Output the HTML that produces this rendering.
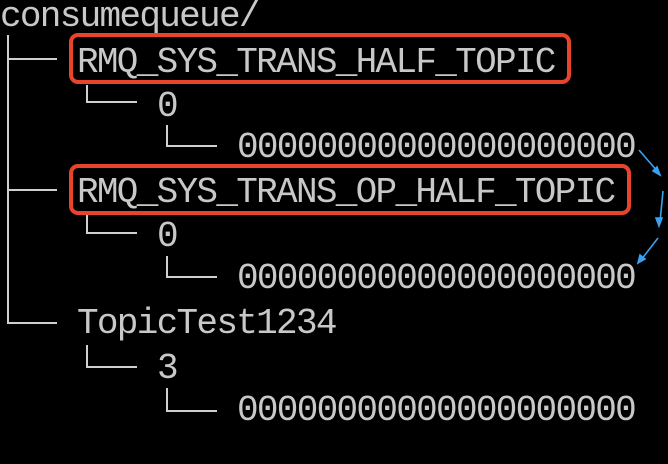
<!DOCTYPE html>
<html><head><style>
html,body{margin:0;padding:0;background:#000;width:668px;height:464px;overflow:hidden;position:relative}
.t{position:absolute;font-family:"Liberation Mono",monospace;font-size:36px;line-height:36px;letter-spacing:-1.7px;color:#c8c8c8;white-space:pre}
.l{position:absolute;background:#cfcfcf}
.box{position:absolute;border:4px solid #e8442c;border-radius:9px;box-sizing:border-box}
</style></head><body>
<div class="t" style="left:0;top:-1px">consumequeue/</div>
<div class="t" style="left:77px;top:45px">RMQ_SYS_TRANS_HALF_TOPIC</div>
<div class="t" style="left:157px;top:89px">0</div>
<div class="t" style="left:237px;top:130px">00000000000000000000</div>
<div class="t" style="left:77px;top:175px">RMQ_SYS_TRANS_OP_HALF_TOPIC</div>
<div class="t" style="left:157px;top:219px">0</div>
<div class="t" style="left:237px;top:261px">00000000000000000000</div>
<div class="t" style="left:77px;top:306px">TopicTest1234</div>
<div class="t" style="left:157px;top:351px">3</div>
<div class="t" style="left:237px;top:393px">00000000000000000000</div>

<div class="l" style="left:7px;top:35px;width:2px;height:289px"></div>
<div class="l" style="left:7px;top:58px;width:50px;height:2px"></div>
<div class="l" style="left:7px;top:189px;width:50px;height:2px"></div>
<div class="l" style="left:7px;top:322px;width:50px;height:2px"></div>

<div class="l" style="left:86px;top:85px;width:2px;height:18px"></div>
<div class="l" style="left:86px;top:101px;width:51px;height:2px"></div>
<div class="l" style="left:166px;top:125px;width:2px;height:22px"></div>
<div class="l" style="left:166px;top:145px;width:51px;height:2px"></div>

<div class="l" style="left:86px;top:215px;width:2px;height:19px"></div>
<div class="l" style="left:86px;top:232px;width:51px;height:2px"></div>
<div class="l" style="left:166px;top:256px;width:2px;height:22px"></div>
<div class="l" style="left:166px;top:276px;width:51px;height:2px"></div>

<div class="l" style="left:86px;top:345px;width:2px;height:22px"></div>
<div class="l" style="left:86px;top:366px;width:51px;height:2px"></div>
<div class="l" style="left:166px;top:388px;width:2px;height:23px"></div>
<div class="l" style="left:166px;top:410px;width:51px;height:2px"></div>

<div class="box" style="left:69px;top:33px;width:502px;height:51px"></div>
<div class="box" style="left:69px;top:164px;width:562px;height:51px"></div>

<svg width="668" height="464" style="position:absolute;left:0;top:0">
<g stroke="#3aa0f0" stroke-width="1.6" fill="#3aa0f0">
<line x1="639" y1="150" x2="658" y2="172"/>
<polygon points="660,175 653,171 657,167"/>
<line x1="663" y1="191" x2="660" y2="222"/>
<polygon points="659,226 656,218 662,218"/>
<line x1="658" y1="238" x2="641" y2="260"/>
<polygon points="638,263 640,255 645,259"/>
</g>
</svg>
</body></html>
